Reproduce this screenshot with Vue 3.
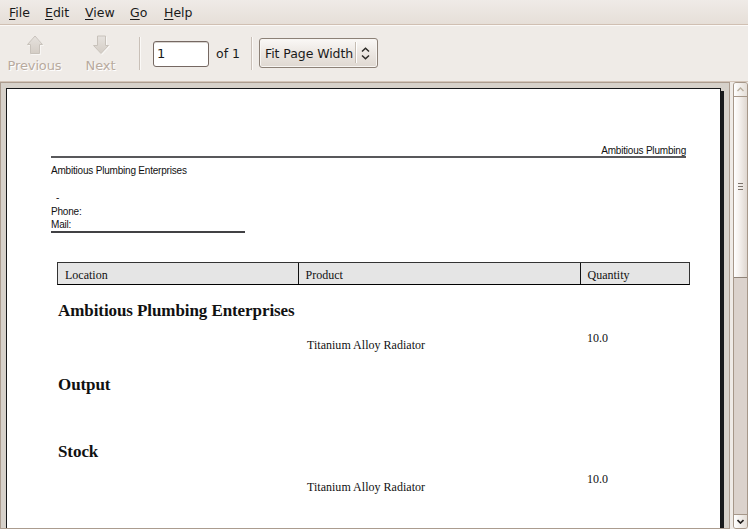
<script setup>
const menus = ['File', 'Edit', 'View', 'Go', 'Help']
</script>

<template>
  <div class="window">
    <nav class="menubar">
      <span v-for="m in menus" :key="m" class="menu" :class="m.toLowerCase()"><u>{{ m[0] }}</u>{{ m.slice(1) }}</span>
    </nav>
    <header class="toolbar">
      <div class="tool previous">
        <svg width="18" height="20" viewBox="0 0 18 20">
          <defs><linearGradient id="fade" x2="0" y2="1"><stop stop-color="#e6e2de" /><stop offset="1" stop-color="#d4cdc5" /></linearGradient></defs>
          <path d="M9 1L16.500 9.500H13.500V18.500H4.500V9.500H1.500Z" fill="url(#fade)" stroke="#c8c2bb" stroke-linejoin="round" />
        </svg>
        <span>Previous</span>
      </div>
      <div class="tool next">
        <svg width="18" height="20" viewBox="0 0 18 20">
          <path d="M9 18.500L1.500 10.500H5.500V1H13.500V10.500H16.500Z" fill="url(#fade)" stroke="#c8c2bb" stroke-linejoin="round" />
        </svg>
        <span>Next</span>
      </div>
      <i class="sep"></i>
      <div class="entry">1</div>
      <span class="of">of 1</span>
      <i class="sep second"></i>
      <div class="combo">
        <span class="combo-text">Fit Page Width</span>
        <i class="combo-line"></i>
        <svg width="9" height="13" viewBox="0 0 9 13" fill="none" stroke="#2b2926" stroke-width="1.5">
          <path d="M1 4.500L4.500 1.200L8 4.500M1 8.500L4.500 11.800L8 8.500" />
        </svg>
      </div>
    </header>
    <main class="body">
      <section class="view">
        <div class="sheet">
          <article class="page">
            <div class="company-head"><span>Ambitious Plumbing</span></div>
            <div class="address">
              <p class="company">Ambitious Plumbing Enterprises</p>
              <p class="dash">-</p>
              <p class="phone">Phone:</p>
              <p class="mail">Mail:</p>
            </div>
            <div class="table-head">
              <span>Location</span><span>Product</span><span>Quantity</span>
            </div>
            <h2 class="h-company">Ambitious Plumbing Enterprises</h2>
            <div class="row"><span class="product">Titanium Alloy Radiator</span><span class="qty">10.0</span></div>
            <h2 class="h-output">Output</h2>
            <h2 class="h-stock">Stock</h2>
            <div class="row last"><span class="product">Titanium Alloy Radiator</span><span class="qty">10.0</span></div>
          </article>
          <div class="shadow"></div>
        </div>
      </section>
      <aside class="scrollbar">
        <div class="step up">
          <svg width="7" height="5" viewBox="0 0 7 5" fill="none" stroke="#b9ae9e" stroke-width="1.400"><path d="M.5 4L3.500 1L6.500 4" /></svg>
        </div>
        <div class="thumb"><i></i><i></i><i></i></div>
        <div class="trough"></div>
        <div class="step down">
          <svg width="7" height="5" viewBox="0 0 7 5" fill="none" stroke="#24211f" stroke-width="1.700"><path d="M.5 1L3.500 4L6.500 1" /></svg>
        </div>
      </aside>
    </main>
  </div>
</template>

<style>
body { margin: 0; overflow: hidden; }
</style>

<style scoped>
* { box-sizing: border-box; }
.window { width: 748px; height: 529px; display: flex; flex-direction: column; overflow: hidden; background: #efebe7; color: #1a1a1a; font: 13px/16px "DejaVu Sans", sans-serif; }
.menubar { height: 25px; flex: none; display: flex; padding: 5px 0 0 9px; background: linear-gradient(#efebe7, #e6dfd8); border-bottom: 1px solid #d0bfb2; }
.menu { flex: none; white-space: nowrap; font-size: 12.5px; }
.menu u { text-underline-offset: 2px; text-decoration-thickness: 1px; }
.file { width: 36px; }
.edit { width: 40px; }
.view { flex: none; }
.menubar .view { width: 45px; }
.go { width: 34px; }
.toolbar { height: 57px; flex: none; display: flex; align-items: flex-start; border-top: 1px solid #fbf9f7; border-bottom: 1px solid #d3c5b9; }
.tool { display: flex; flex-direction: column; align-items: center; flex: none; padding-top: 9px; color: #b8aa9e; text-shadow: 1px 1px #fff; white-space: nowrap; }
.tool svg { filter: drop-shadow(1px 1px 0 #f8f6f4); }
.tool span { margin-top: 3px; letter-spacing: -.13px; }
.previous { width: 69px; }
.next { width: 63px; }
.sep { width: 2px; height: 33px; flex: none; margin: 11px 0 0 7px; background: #c9c0b8; border-right: 1px solid #fbf9f7; }
.entry { width: 56px; height: 26px; flex: none; margin: 15px 0 0 12px; padding: 4px 3px; background: #fff; border: 1px solid #756862; border-radius: 3px; box-shadow: inset 0 1px #d8d4d0; }
.of { width: 28px; flex: none; margin: 20px 0 0 7px; white-space: nowrap; font-size: 12.5px; }
.second { margin-left: 7px; }
.combo { width: 119px; height: 30px; flex: none; display: flex; margin: 12px 0 0 6px; padding: 7px 0 0 5px; border: 1px solid #8c8177; border-radius: 3px; background: linear-gradient(#faf8f6, #ece7e2 50%, #dfd8d1); box-shadow: inset 0 0 0 1px #f8f5f2; }
.combo-text { width: 90px; white-space: nowrap; font-size: 12.5px; letter-spacing: -.08px; }
.combo-line { width: 2px; height: 21px; margin-top: -4px; background: #c5bcb2; border-right: 1px solid #fff; }
.combo svg { margin: 1px 0 0 4px; }
.body { height: 447px; display: flex; flex: none; }
.body .view { width: 730px; height: 447px; padding: 5px 0 0 5px; border: 1px solid #ab9c8f; background: #d6d1ca; overflow: hidden; }
.sheet { width: 718px; height: 440px; display: flex; }
.page { width: 715px; height: 440px; flex: none; padding: 54px 30px 0 44px; border: 1px solid #151719; border-bottom: 0; background: #fff; color: #111; }
.shadow { width: 3px; height: 437px; margin-top: 3px; background: #181a1c; }
.company-head { width: 635px; height: 15px; border-bottom: 2px solid #58585b; text-align: right; font: 10px/16px "Liberation Sans", sans-serif; letter-spacing: -.2px; }
.address { width: 194px; height: 75px; border-bottom: 2px solid #414144; font: 10px/14px "Liberation Sans", sans-serif; letter-spacing: -.2px; }
.address p { margin: 0; }
.address .company { padding-top: 6px; white-space: nowrap; }
.address .dash { margin: 13px 0 0 5px; }
.address .mail { margin-top: -1px; }
.table-head { width: 633px; height: 23px; display: grid; grid-template-columns: 240px 282px 1fr; grid-template-rows: 21px; margin: 29px 0 0 6px; border: 1px solid #333; border-bottom-color: #000; background: #e5e5e5; font: 12px/22px "Liberation Serif", serif; }
.table-head span { padding: 1px 0 0 7px; }
.table-head span + span { padding-left: 6.500px; border-left: 1px solid #111; }
h2 { margin: 0 0 0 7px; font: bold 17px/20px "Liberation Serif", serif; letter-spacing: -.08px; white-space: nowrap; }
.h-company { margin-top: 16px; }
.row { height: 35px; display: flex; padding: 8px 0 0 256px; font: 12px/18px "Liberation Serif", serif; white-space: nowrap; }
.product { width: 280px; padding-top: 7px; letter-spacing: .02px; }
.last .product { padding-top: 8px; }
.h-output { margin-top: 19px; }
.h-stock { margin-top: 47px; }
.scrollbar { width: 15px; height: 447px; margin-left: 3px; flex: none; display: flex; flex-direction: column; border: 1px solid #a69789; border-radius: 3px; background: #dbd2cc; }
.step { height: 14px; flex: none; display: flex; align-items: center; justify-content: center; background: linear-gradient(90deg, #fff, #e4ddd6); }
.up { border-bottom: 1px solid #a69789; border-radius: 2px 2px 0 0; }
.down { border-top: 1px solid #a69789; border-radius: 0 0 2px 2px; }
.thumb { height: 181px; flex: none; display: flex; flex-direction: column; align-items: center; padding-top: 86px; gap: 2px; border-bottom: 1px solid #8f8378; background: linear-gradient(90deg, #fff, #f5f1ee 40%, #ded6cf); }
.thumb i { width: 5px; height: 1px; flex: none; background: #7c736b; }
.trough { flex: 1; }
</style>
